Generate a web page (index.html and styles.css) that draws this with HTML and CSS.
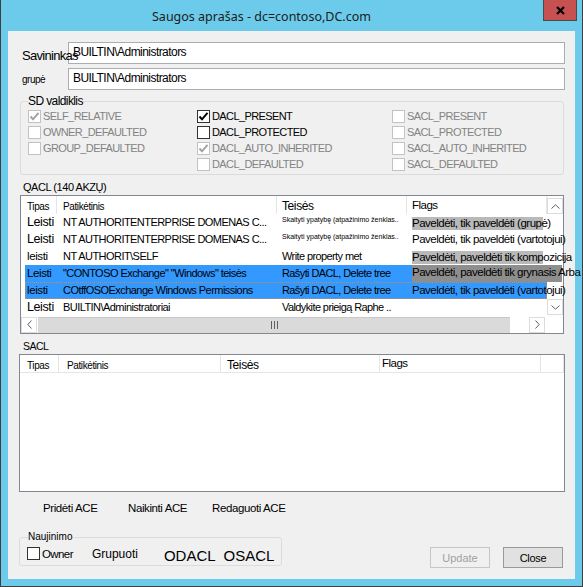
FILE: index.html
```html
<!DOCTYPE html>
<html lang="lt">

<head>
    <meta charset="UTF-8">
    <title>Saugos aprašas</title>
    <link rel="stylesheet" href="styles.css">
</head>

<body>
    <div class="window">
        <div class="titlebar">
            <span class="title">Saugos aprašas - dc=contoso,DC.com</span>
            <span class="close">
                <svg width="9" height="9" viewBox="0 0 9 9"><path d="M1 1L8 8M8 1L1 8" stroke="#000" stroke-width="2.2" fill="none"/></svg>
            </span>
        </div>

        <div class="client">
            <!-- savininkas / grupė -->
            <div class="field">
                <label class="field-label owner-label">Savininkas</label>
                <div class="textbox">BUILTIN\Administrators</div>
            </div>
            <div class="field">
                <label class="field-label group-label">grupė</label>
                <div class="textbox">BUILTIN\Administrators</div>
            </div>

            <!-- SD valdiklis -->
            <fieldset class="groupbox sd">
                <legend>SD valdiklis</legend>
                <div class="sd-grid">
                    <label class="chk disabled"><span class="box"><svg width="11" height="11" viewBox="0 0 11 11"><path d="M1.5 5.5L4 8.3L9.5 1.8" stroke="currentColor" stroke-width="2" fill="none"/></svg></span>SELF_RELATIVE</label>
                    <label class="chk"><span class="box"><svg width="11" height="11" viewBox="0 0 11 11"><path d="M1.5 5.5L4 8.3L9.5 1.8" stroke="currentColor" stroke-width="2" fill="none"/></svg></span>DACL_PRESENT</label>
                    <label class="chk disabled"><span class="box"></span>SACL_PRESENT</label>

                    <label class="chk disabled"><span class="box"></span>OWNER_DEFAULTED</label>
                    <label class="chk"><span class="box"></span>DACL_PROTECTED</label>
                    <label class="chk disabled"><span class="box"></span>SACL_PROTECTED</label>

                    <label class="chk disabled"><span class="box"></span>GROUP_DEFAULTED</label>
                    <label class="chk disabled"><span class="box"><svg width="11" height="11" viewBox="0 0 11 11"><path d="M1.5 5.5L4 8.3L9.5 1.8" stroke="currentColor" stroke-width="2" fill="none"/></svg></span>DACL_AUTO_INHERITED</label>
                    <label class="chk disabled"><span class="box"></span>SACL_AUTO_INHERITED</label>

                    <span></span>
                    <label class="chk disabled"><span class="box"></span>DACL_DEFAULTED</label>
                    <label class="chk disabled"><span class="box"></span>SACL_DEFAULTED</label>
                </div>
            </fieldset>

            <!-- DACL -->
            <div class="caption">QACL (140 AKZŲ)</div>
            <div class="list dacl">
                <div class="list-main">
                    <div class="cols">
                        <div class="lv-head dacl-head">
                            <span>Tipas</span>
                            <span>Patikėtinis</span>
                            <span class="h-lg">Teisės</span>
                            <span class="h-flags">Flags</span>
                        </div>
                        <div class="lv-row">
                            <span class="t-lg">Leisti</span>
                            <span>NT AUTHORITENTERPRISE DOMENAS C...</span>
                            <span class="tiny">Skaityti ypatybę (atpažinimo ženklas..</span>
                            <span class="flag"><span class="hl">Paveldėti, tik paveldėti (grupė)</span></span>
                        </div>
                        <div class="lv-row">
                            <span class="t-lg">Leisti</span>
                            <span>NT AUTHORITENTERPRISE DOMENAS C...</span>
                            <span class="tiny">Skaityti ypatybę (atpažinimo ženklas..</span>
                            <span class="flag">Paveldėti, tik paveldėti (vartotojui)</span>
                        </div>
                        <div class="lv-row">
                            <span class="t-md ind-1">leisti</span>
                            <span>NT AUTHORIT\SELF</span>
                            <span class="ind-wide">Write property met</span>
                            <span class="flag"><span class="hl">Paveldėti, paveldėti tik kompozicija</span></span>
                        </div>
                        <div class="lv-row sel">
                            <span class="t-md">Leisti</span>
                            <span>"CONTOSO Exchange" "Windows" teisės</span>
                            <span class="ind-mid">Rašyti DACL, Delete tree</span>
                            <span class="flag"><span class="hl dark">Paveldėti, paveldėti tik grynasis Arba</span></span>
                        </div>
                        <div class="lv-row sel focus">
                            <span class="t-md ind-2">leisti</span>
                            <span>COtffOSOExchange Windows Permissions</span>
                            <span>Rašyti DACL, Delete tree</span>
                            <span class="flag">Paveldėti, tik paveldėti (vartotojui)</span>
                        </div>
                        <div class="lv-row">
                            <span class="t-lg">Leisti</span>
                            <span>BUILTIN\Administratoriai</span>
                            <span>Valdykite prieigą Raphe ..</span>
                            <span class="flag"></span>
                        </div>
                    </div>
                    <div class="vscroll">
                        <span class="sb-btn"><svg width="9" height="5" viewBox="0 0 9 5"><path d="M0.5 4.5L4.5 0.8L8.5 4.5" stroke="#606060" fill="none"/></svg></span>
                        <span class="sb-btn"><svg width="9" height="5" viewBox="0 0 9 5"><path d="M0.5 0.5L4.5 4.2L8.5 0.5" stroke="#606060" fill="none"/></svg></span>
                    </div>
                </div>
                <div class="hscroll">
                    <span class="sb-btn"><svg width="5" height="9" viewBox="0 0 5 9"><path d="M4.5 0.5L0.8 4.5L4.5 8.5" stroke="#606060" fill="none"/></svg></span>
                    <span class="thumb"><span class="grip"></span></span>
                    <span class="track"></span>
                    <span class="sb-btn"><svg width="5" height="9" viewBox="0 0 5 9"><path d="M0.5 0.5L4.2 4.5L0.5 8.5" stroke="#606060" fill="none"/></svg></span>
                    <span class="corner"></span>
                </div>
            </div>

            <!-- SACL -->
            <div class="caption caption-sm">SACL</div>
            <div class="list sacl">
                <div class="lv-head sacl-head">
                    <span>Tipas</span>
                    <span>Patikėtinis</span>
                    <span class="h-lg">Teisės</span>
                    <span class="h-flags">Flags</span>
                    <span></span>
                </div>
            </div>

            <div class="actions">
                <span>Pridėti ACE</span>
                <span>Naikinti ACE</span>
                <span>Redaguoti ACE</span>
            </div>

            <div class="bottom">
                <fieldset class="groupbox update-group">
                    <legend>Naujinimo</legend>
                    <div class="update-row">
                        <label class="chk chk-owner"><span class="box"></span>Owner</label>
                        <span class="grp">Grupuoti</span>
                        <span class="acl odacl">ODACL</span>
                        <span class="acl osacl">OSACL</span>
                    </div>
                </fieldset>
                <span class="btn disabled btn-update">Update</span>
                <span class="btn btn-close">Close</span>
            </div>
        </div>
    </div>
</body>

</html>
```

FILE: styles.css
```css
* {
    box-sizing: border-box;
}

body {
    margin: 0;
    font-family: "Liberation Sans", Arial, sans-serif;
    font-size: 11px;
    color: #000;
}

/* window frame */
.window {
    width: 583px;
    height: 587px;
    display: flex;
    flex-direction: column;
    background: #6ccbea;
    border: 1px solid #3f3f3f;
    border-top: 0;
    padding-bottom: 7px;
}

.titlebar {
    height: 31px;
    flex-shrink: 0;
    display: flex;
    align-items: flex-start;
}

.title {
    margin: 8px 0 0 151px;
    font-family: "Noto Sans", sans-serif;
    font-size: 12.5px;
    color: #1b1b1b;
}

.close {
    margin-left: auto;
    margin-right: 5px;
    width: 34px;
    height: 21px;
    display: flex;
    align-items: center;
    justify-content: center;
    background: #c75050;
    border: 1px solid #4a4a4a;
    border-top: 0;
}

.client {
    flex: 1;
    margin: 0 7px;
    background: #f0f0f0;
    padding: 11px 10px 0 11px;
}

/* owner / group */
.field {
    display: flex;
    align-items: flex-end;
    height: 22px;
}

.field + .field {
    margin-top: 4px;
}

/* label text may run over the edit box, as in the dialog */
.field-label {
    flex: 0 0 49px;
    min-width: 0;
    padding-left: 3px;
    white-space: nowrap;
    position: relative;
    z-index: 1;
}

.owner-label {
    font-size: 13px;
    letter-spacing: -0.7px;
    line-height: 16px;
}

.group-label {
    font-size: 10px;
    letter-spacing: -0.5px;
    align-self: center;
}

.textbox {
    flex: 1;
    height: 22px;
    background: #fff;
    border: 1px solid #abadb3;
    padding: 0 4px;
    font-size: 12px;
    letter-spacing: -0.55px;
    line-height: 19px;
}

/* group boxes */
.groupbox {
    margin: 0;
    padding: 0 0 0 7px;
    border: 1px solid #dcdcdc;
    border-radius: 3px;
    min-width: 0;
}

.groupbox legend {
    padding: 0;
}

.sd {
    margin: 4px 1px 0 1px;
    padding-bottom: 2px;
}

.sd legend {
    font-size: 12px;
    letter-spacing: -0.6px;
    line-height: 14px;
}

.sd-grid {
    display: grid;
    grid-template-columns: 169px 195px 1fr;
    grid-auto-rows: 16px;
}

.chk {
    display: flex;
    align-items: center;
    gap: 2px;
    white-space: nowrap;
    font-size: 11px;
    letter-spacing: -0.6px;
}

.box {
    width: 13px;
    height: 13px;
    flex-shrink: 0;
    display: flex;
    align-items: center;
    justify-content: center;
    background: #fff;
    border: 1px solid #333;
    color: #000;
}

.chk.disabled {
    color: #838383;
}

.chk.disabled .box {
    border-color: #c2c2c2;
    color: #a3a3a3;
}

/* list views */
.caption {
    margin: 6px 0 1px 4px;
    font-size: 11px;
    letter-spacing: -0.45px;
    line-height: 13px;
}

.caption-sm {
    font-size: 10.5px;
    letter-spacing: -0.5px;
}

.list {
    background: #fff;
    border: 1px solid #828790;
}

.dacl {
    height: 139px;
    margin: 0 1px;
}

.list-main {
    display: flex;
    height: 120px;
}

.cols {
    width: 526px;
    position: relative;
    z-index: 1;
}

.lv-head {
    display: grid;
    height: 18px;
}

.lv-head span {
    border-right: 1px solid #e5e5e5;
    padding: 5px 0 0 6px;
    font-size: 10px;
    letter-spacing: -0.4px;
    line-height: 12px;
    white-space: nowrap;
}

.lv-head .h-lg {
    font-size: 12px;
    letter-spacing: -0.4px;
    padding-top: 4px;
    padding-left: 5px;
}

.lv-head .h-flags {
    font-size: 11.5px;
    letter-spacing: -0.5px;
    padding-top: 3px;
    padding-left: 5px;
}

.dacl-head {
    grid-template-columns: 36px 220px 130px 140px;
}

.lv-row {
    display: grid;
    grid-template-columns: 32px 220px 130px 140px;
    height: 17px;
    margin-left: 4px;
    white-space: nowrap;
    line-height: 17px;
    letter-spacing: -0.6px;
}

.lv-row > span {
    overflow: hidden;
}

.lv-row > span:first-child {
    padding-left: 2px;
}

.lv-row > span:nth-child(2) {
    padding-left: 6px;
    letter-spacing: -0.55px;
}

.lv-row > span:nth-child(3) {
    padding-left: 5px;
}

.lv-row.sel {
    background: #3399ff;
}

.lv-row.focus {
    outline: 1px dotted #c98a52;
    outline-offset: -1px;
}

.lv-row > .t-lg {
    font-size: 12.5px;
    letter-spacing: -0.4px;
}

.lv-row > .t-md {
    font-size: 11.5px;
    letter-spacing: -0.4px;
}

.lv-row > .ind-1 {
    padding-left: 3px;
}

.lv-row > .ind-2 {
    padding-left: 4px;
}

.lv-row > .ind-mid {
    padding-left: 8px;
}

.lv-row > .ind-wide {
    padding-left: 19px;
}

.lv-row > .tiny {
    padding-left: 1px;
    font-size: 7px;
    letter-spacing: 0;
    line-height: 12px;
}

.lv-row > .flag {
    overflow: visible;
    padding-left: 5px;
    font-size: 11.5px;
    letter-spacing: -0.5px;
}

.hl {
    display: block;
    width: 131px;
    margin-top: 3px;
    line-height: 13px;
    background: #b9b9b9;
}

.hl.dark {
    width: 150px;
    margin-top: 0;
    height: 17px;
    line-height: 14px;
    background: #8e8e8e;
}

.vscroll {
    width: 16px;
    display: flex;
    flex-direction: column;
    justify-content: space-between;
    padding: 2px 0 1px;
}

.sb-btn {
    width: 16px;
    height: 16px;
    flex-shrink: 0;
    display: flex;
    align-items: center;
    justify-content: center;
    background: #fff;
    border: 1px solid #dcdcdc;
}

.hscroll {
    height: 17px;
    display: flex;
    align-items: center;
}

.thumb {
    width: 472px;
    height: 16px;
    margin-left: 1px;
    display: flex;
    align-items: center;
    justify-content: center;
    background: #dadada;
    border-top: 1px solid #c8c8c8;
}

/* three grip lines in the middle of the thumb */
.grip {
    width: 7px;
    height: 8px;
    background: linear-gradient(to right, #606060 0 1px, transparent 1px 3px, #606060 3px 4px, transparent 4px 6px, #606060 6px 7px);
}

.track {
    flex: 1;
}

.corner {
    width: 18px;
}

.sacl {
    height: 138px;
}

.sacl-head {
    grid-template-columns: 39px 162px 159px 161px 1fr;
    height: 18px;
    border-bottom: 1px solid #e5e5e5;
}

.sacl-head span:first-child {
    padding-left: 7px;
}

.sacl-head span:nth-child(2) {
    padding-left: 8px;
}

.sacl-head .h-lg {
    padding-left: 6px;
}

.sacl-head .h-flags {
    padding-left: 2px;
    padding-top: 2px;
}

/* buttons */
.actions {
    display: flex;
    margin: 8px 0 0 24px;
    font-size: 11.5px;
    letter-spacing: -0.4px;
    line-height: 16px;
}

.actions span {
    width: 85px;
    white-space: nowrap;
}

.actions span:nth-child(2) {
    width: 84px;
}

.bottom {
    display: flex;
    align-items: flex-start;
    margin-top: 15px;
}

.update-group {
    width: 263px;
    padding-bottom: 1px;
}

.update-group legend {
    margin-left: 1px;
    font-size: 10px;
    line-height: 12px;
}

.update-row {
    display: flex;
    align-items: center;
    height: 21px;
    white-space: nowrap;
}

.chk-owner {
    font-size: 11.5px;
    letter-spacing: -0.6px;
}

.grp {
    margin-left: 19px;
    font-size: 12px;
}

.acl {
    font-size: 15px;
    margin-top: 3px;
}

.odacl {
    margin-left: 26px;
}

.osacl {
    margin-left: 8px;
}

.btn {
    width: 60px;
    height: 21px;
    display: flex;
    align-items: center;
    justify-content: center;
    font-size: 11px;
    background: #e1e1e1;
    border: 1px solid #999;
}

.btn.disabled {
    color: #a0a0a0;
    background: #f0f0f0;
    border-color: #c6c6c6;
}

.btn-update {
    margin: 16px 0 0 auto;
}

.btn-close {
    margin: 16px 2px 0 13px;
    letter-spacing: -0.3px;
}
```
